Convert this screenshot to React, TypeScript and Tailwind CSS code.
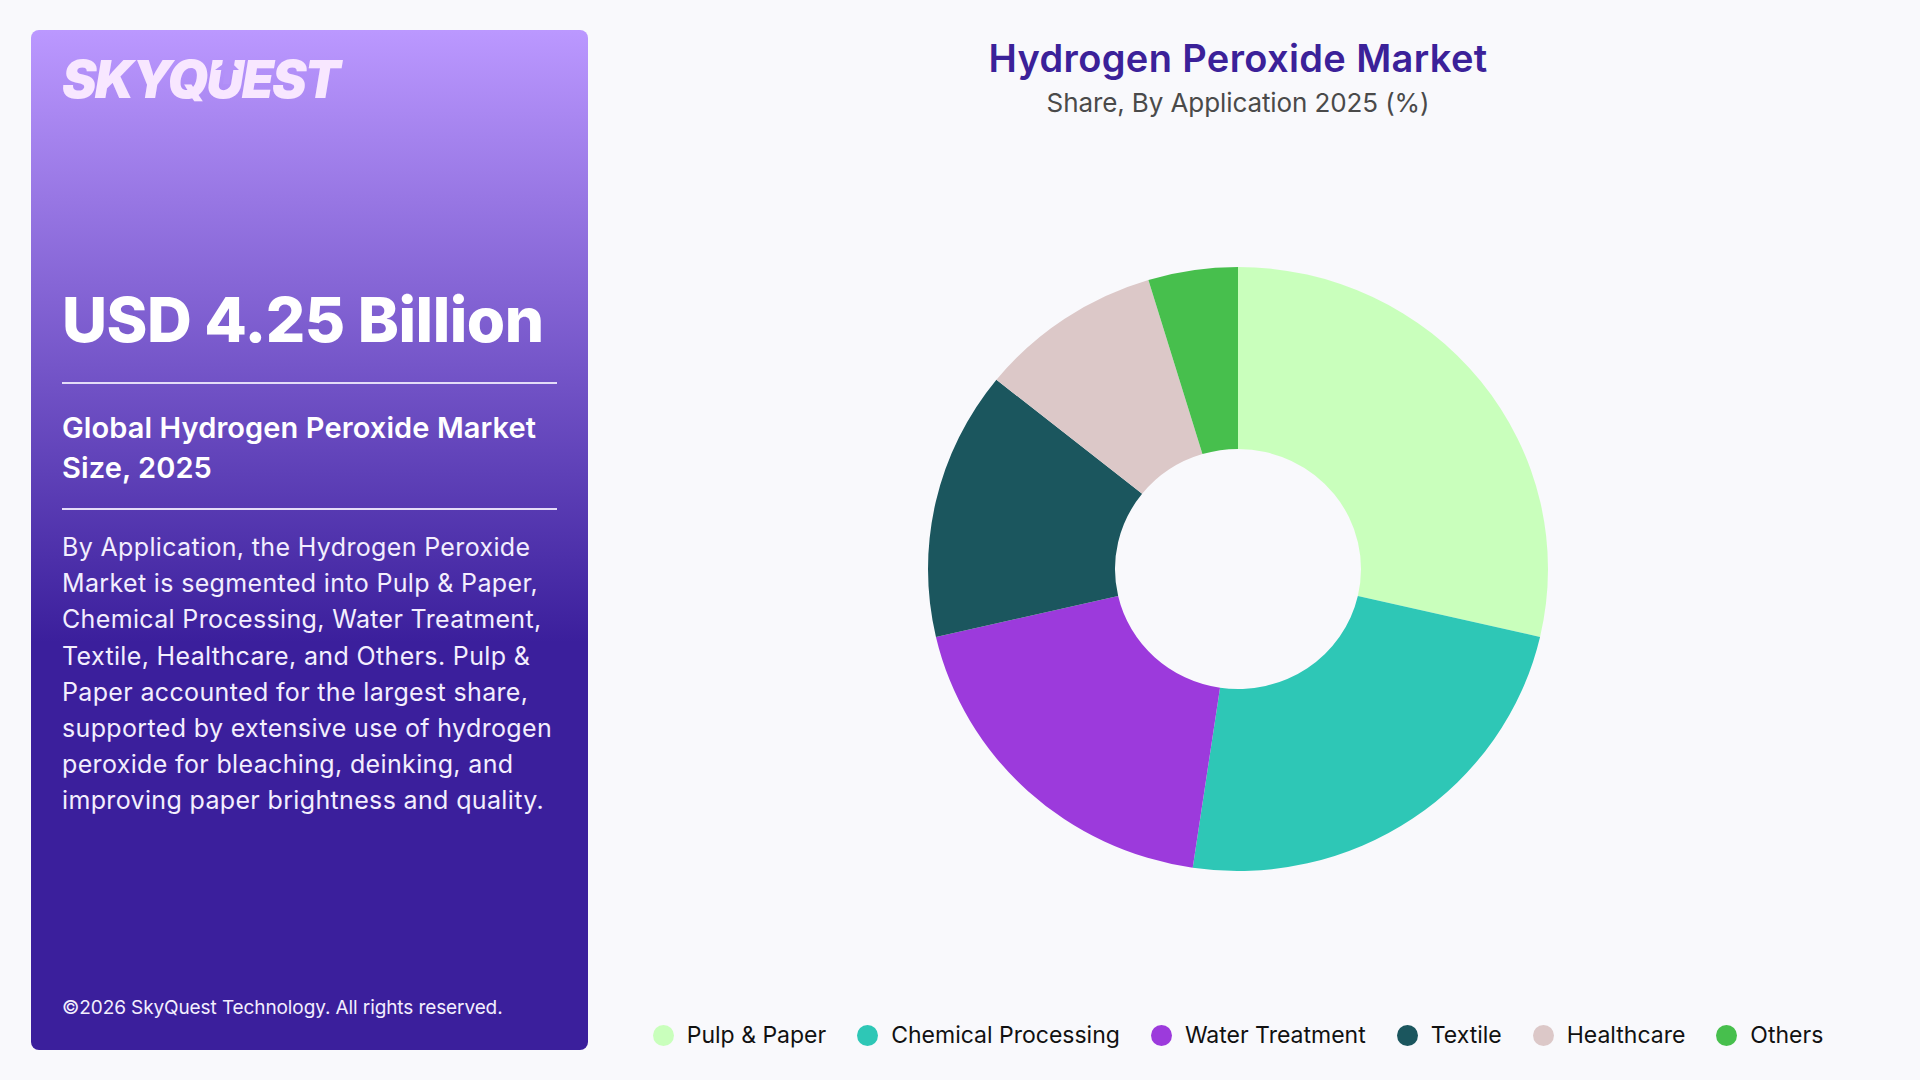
const segments = [
  { label: "Pulp & Paper", color: "#c9ffbc", from: 0, to: 103 },
  { label: "Chemical Processing", color: "#2ec7b6", from: 103, to: 188.4 },
  { label: "Water Treatment", color: "#9c3adc", from: 188.4, to: 257 },
  { label: "Textile", color: "#1b565e", from: 257, to: 308.8 },
  { label: "Healthcare", color: "#dcc8c8", from: 308.8, to: 343.2 },
  { label: "Others", color: "#47bf4d", from: 343.2, to: 360 },
];

const bodyLines = [
  "By Application, the Hydrogen Peroxide",
  "Market is segmented into Pulp & Paper,",
  "Chemical Processing, Water Treatment,",
  "Textile, Healthcare, and Others. Pulp &",
  "Paper accounted for the largest share,",
  "supported by extensive use of hydrogen",
  "peroxide for bleaching, deinking, and",
  "improving paper brightness and quality.",
];

// donut in the reference is slightly squashed, so two radii per ring
function slicePath(from: number, to: number) {
  const cx = 310;
  const cy = 302;
  const pt = (deg: number, rx: number, ry: number) => {
    const a = (deg * Math.PI) / 180;
    return `${(cx + rx * Math.sin(a)).toFixed(2)} ${(cy - ry * Math.cos(a)).toFixed(2)}`;
  };
  const large = to - from > 180 ? 1 : 0;
  return [
    `M ${pt(from, 310, 302)}`,
    `A 310 302 0 ${large} 1 ${pt(to, 310, 302)}`,
    `L ${pt(to, 123, 120)}`,
    `A 123 120 0 ${large} 0 ${pt(from, 123, 120)}`,
    "Z",
  ].join(" ");
}

function Logo() {
  return (
    <div className="flex h-[40px] items-center text-[52px] font-black italic leading-none tracking-[-2px] text-[#f8e7ff]">
      SKYQ
      <span className="relative">
        U
        <svg viewBox="0 0 24 28" className="absolute left-[9px] top-[6px] h-[28px] w-[24px]">
          <path d="M13.7 0 L24 10 H16 L14.5 24 H8 L9.5 10 H0 Z" fill="#b391f8" />
        </svg>
      </span>
      EST
    </div>
  );
}

export default function App() {
  return (
    <div className="flex h-[1080px] w-[1920px] overflow-hidden bg-[#f9f9fc] py-[30px] pl-[31px] pr-[32px] font-['Inter',sans-serif]">
      <aside className="flex w-[557px] shrink-0 flex-col rounded-[8px] bg-[linear-gradient(180deg,#bb98ff_0%,#3b1f9c_60%,#3b1f9c_100%)] px-[31px] pb-[28px] pt-[30px] text-white">
        <Logo />
        <h1 className="mt-[184px] whitespace-nowrap text-[62px] font-extrabold leading-[72px] tracking-[-0.5px]">USD 4.25 Billion</h1>
        <div className="mt-[26px] h-[2px] bg-[#e4dcf8]" />
        <h2 className="mt-[24px] whitespace-nowrap text-[29px] font-semibold leading-[40px] tracking-[0.1px]">
          Global Hydrogen Peroxide Market
          <br />
          Size, 2025
        </h2>
        <div className="mt-[20px] h-[2px] bg-[#e4dcf8]" />
        <div className="mt-[19px] whitespace-nowrap text-[25px] leading-[36.2px] tracking-[0.35px] text-[#f3eefe]">
          {bodyLines.map((line) => (
            <div key={line}>{line}</div>
          ))}
        </div>
        <p className="mt-auto whitespace-nowrap text-[19px] font-normal leading-[28px] tracking-[-0.1px] text-[#f3eefe]">
          ©2026 SkyQuest Technology. All rights reserved.
        </p>
      </aside>

      <main className="flex flex-1 flex-col items-center">
        <h2 className="whitespace-nowrap text-[38px] font-semibold leading-[56px] tracking-[0.37px] text-[#3b2199]">Hydrogen Peroxide Market</h2>
        <p className="whitespace-nowrap text-[26px] leading-[34px] tracking-[-0.1px] text-[#4a4a4a]">Share, By Application 2025 (%)</p>
        <svg viewBox="0 0 620 604" className="mt-[147px] h-[604px] w-[620px] shrink-0">
          {segments.map((s) => (
            <path key={s.label} d={slicePath(s.from, s.to)} fill={s.color} />
          ))}
        </svg>
        <div className="mt-auto flex items-center gap-[31px]">
          {segments.map((s) => (
            <div key={s.label} className="flex translate-y-[1px] items-center gap-[13px]">
              <span className="h-[21px] w-[21px] rounded-full" style={{ backgroundColor: s.color }} />
              <span className="whitespace-nowrap text-[23px] leading-[32px] text-[#111]">{s.label}</span>
            </div>
          ))}
        </div>
      </main>
    </div>
  );
}
